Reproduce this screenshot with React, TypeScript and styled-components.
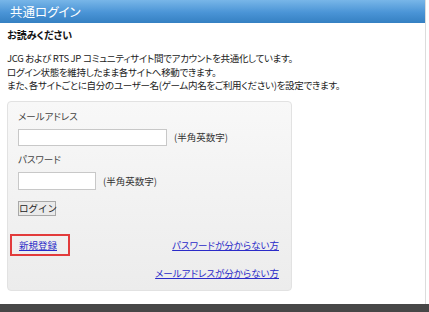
import React from 'react';
import styled, { createGlobalStyle } from 'styled-components';

const GlobalStyle = createGlobalStyle`
  html, body {
    margin: 0;
    padding: 0;
    background: #fff;
  }
  body {
    font-family: "Noto Sans CJK JP", "Noto Sans", sans-serif;
    font-feature-settings: "palt";
    color: #333;
  }
`;

const Page = styled.div`
  width: 429px;
  height: 312px;
  display: flex;
  flex-direction: column;
  overflow: hidden;
`;

const Window = styled.div`
  width: 425px;
  flex: 1;
  border-right: 1px solid #dcdcdc;
  display: flex;
  flex-direction: column;
`;

const Header = styled.div`
  height: 23px;
  background: linear-gradient(#78b6e8, #4a94d6 55%, #3580c2);
  color: #fff;
  font-size: 12.5px;
  line-height: 23px;
  padding-left: 10px;
`;

const Body = styled.div`
  padding: 5px 7px 0;
`;

const Title = styled.h2`
  margin: 0;
  font-size: 10px;
  font-weight: bold;
  line-height: 14px;
  color: #111;
`;

const Intro = styled.p`
  margin: 10px 0 0;
  font-size: 9.5px;
  letter-spacing: -0.3px;
  line-height: 13.5px;
  color: #222;
`;

const Panel = styled.div`
  margin-top: 8px;
  width: 285px;
  height: 190px;
  box-sizing: border-box;
  border: 1px solid #e2e2e2;
  border-radius: 4px;
  background: linear-gradient(#f8f8f8, #ececec);
  padding: 7px 10px 0 10px;
  display: flex;
  flex-direction: column;
`;

const Label = styled.div`
  font-size: 9.5px;
  line-height: 14px;
  color: #444;
`;

const FieldRow = styled.div`
  display: flex;
  align-items: center;
  gap: 7px;
  margin: 6px 0 6px;
`;

const Input = styled.input<{ w: number; h: number }>`
  width: ${p => p.w}px;
  height: ${p => p.h}px;
  box-sizing: border-box;
  border: 1px solid #c8c8c8;
  background: #fff;
  margin: 0;
  padding: 0;
`;

const Hint = styled.span`
  font-size: 9.5px;
  color: #333;
`;

const LoginButton = styled.button`
  align-self: flex-start;
  margin-top: 5px;
  width: 38px;
  height: 15px;
  padding: 0;
  box-sizing: border-box;
  border: 1px solid #a8a8a8;
  background: #eaeaea;
  font-family: inherit;
  font-size: 9.5px;
  line-height: 12px;
  white-space: nowrap;
  color: #222;
`;

const LinkRow = styled.div`
  display: flex;
  justify-content: space-between;
  align-items: center;
  margin-top: 18px;
  margin-left: -8px;
  padding-right: 2px;
`;

const RegisterBox = styled.div`
  width: 60px;
  height: 22px;
  box-sizing: border-box;
  border: 2px solid #e23b3b;
  padding-left: 7px;
  display: flex;
  align-items: center;
`;

const Link = styled.a`
  font-size: 9.5px;
  color: #2b2bc8;
  text-decoration: underline;
  cursor: pointer;
`;

const RightLink = styled(Link)`
  align-self: flex-end;
  margin-top: 10px;
  margin-right: 2px;
`;

const Spacer = styled.div`
  flex: 1;
`;

const Footer = styled.div`
  height: 8px;
  background: #474747;
`;

export default function App() {
  return (
    <Page>
      <GlobalStyle />
      <Window>
        <Header>共通ログイン</Header>
        <Body>
          <Title>お読みください</Title>
          <Intro>
            JCG および RTS JP コミュニティサイト間でアカウントを共通化しています。
            <br />
            ログイン状態を維持したまま各サイトへ移動できます。
            <br />
            また、各サイトごとに自分のユーザー名(ゲーム内名をご利用ください)を設定できます。
          </Intro>
          <Panel>
            <Label>メールアドレス</Label>
            <FieldRow>
              <Input w={149} h={17} />
              <Hint>(半角英数字)</Hint>
            </FieldRow>
            <Label>パスワード</Label>
            <FieldRow>
              <Input w={78} h={18} type="password" />
              <Hint>(半角英数字)</Hint>
            </FieldRow>
            <LoginButton>ログイン</LoginButton>
            <LinkRow>
              <RegisterBox>
                <Link>新規登録</Link>
              </RegisterBox>
              <Link>パスワードが分からない方</Link>
            </LinkRow>
            <RightLink>メールアドレスが分からない方</RightLink>
          </Panel>
        </Body>
        <Spacer />
      </Window>
      <Footer />
    </Page>
  );
}
